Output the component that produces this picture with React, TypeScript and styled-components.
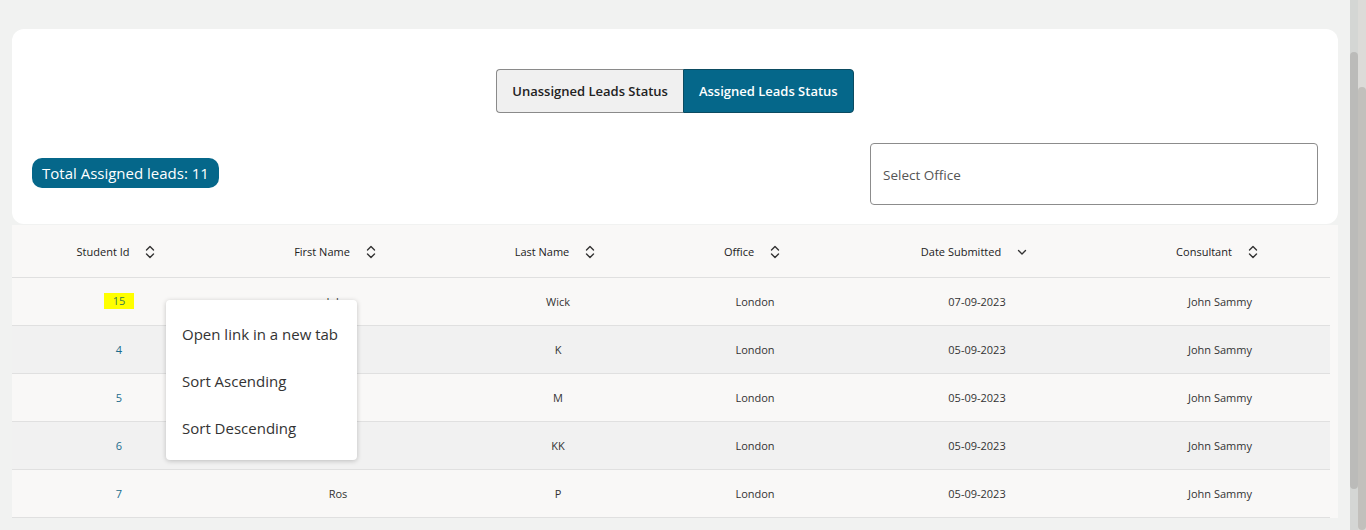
import React from "react";
import styled, { createGlobalStyle } from "styled-components";

const Global = createGlobalStyle`
  html, body { margin: 0; padding: 0; height: 530px; overflow: hidden; }
  body { font-family: "Open Sans", "Noto Sans", Arial, sans-serif; color: #333; }
  * { box-sizing: border-box; }
`;

const Shell = styled.div`
  display: flex;
  width: 1366px;
  height: 530px;
  overflow: hidden;
  background: #f1f2f1;
`;

const Main = styled.main`
  width: 1350px;
  height: 530px;
  padding: 29px 12px 0 12px;
  display: flex;
  flex-direction: column;
`;

const Track = styled.div<{ $bg: string }>`
  width: 8px;
  height: 530px;
  background: ${(p) => p.$bg};
  display: flex;
  flex-direction: column;
`;

const Thumb = styled.div<{ $top: number; $height: number; $bg: string }>`
  margin-top: ${(p) => p.$top}px;
  height: ${(p) => p.$height}px;
  width: 8px;
  border-radius: 4px;
  background: ${(p) => p.$bg};
`;

const Card = styled.section`
  background: #ffffff;
  border-radius: 12px;
  padding: 40px 20px 19px 20px;
  display: flex;
  flex-direction: column;
  align-items: stretch;
  gap: 30px;
`;

const ToggleGroup = styled.div`
  display: flex;
  justify-content: center;
`;

const Toggle = styled.button<{ $active?: boolean; $first?: boolean }>`
  height: 44px;
  padding: 0 15px;
  font-family: "Open Sans", Arial, sans-serif;
  font-size: 13px;
  font-weight: 600;
  color: ${(p) => (p.$active ? "#ffffff" : "#222")};
  background: ${(p) => (p.$active ? "#05678a" : "#f0f0f0")};
  border: 1px solid ${(p) => (p.$active ? "#0b4b61" : "#8a8a8a")};
  border-radius: ${(p) => (p.$first ? "4px 0 0 4px" : "0 4px 4px 0")};
  ${(p) => (p.$first ? "border-right: none;" : "")}
  cursor: pointer;
`;

const FilterRow = styled.div`
  display: flex;
  align-items: center;
  justify-content: space-between;
`;

const Badge = styled.div`
  height: 30px;
  padding: 0 10px;
  display: flex;
  align-items: center;
  background: #05678a;
  color: #fff;
  border-radius: 10px;
  font-size: 15px;
  margin-top: -2px;
`;

const SelectBox = styled.div`
  width: 448px;
  height: 62px;
  border: 1px solid #8c8c8c;
  border-radius: 4px;
  display: flex;
  align-items: center;
  padding: 2px 0 0 12px;
  font-size: 13.5px;
  color: #555;
`;

const TableWrap = styled.div`
  position: relative;
  margin-top: 1px;
  width: 1326px;
  background: #f9f8f7;
  padding-right: 8px;
`;

const Table = styled.table`
  width: 1318px;
  border-collapse: collapse;
  table-layout: fixed;
`;

const Th = styled.th`
  height: 52px;
  padding: 2px 0 0;
  font-weight: 400;
  font-size: 11px;
  color: #222;
  border-bottom: 1px solid #e0e0e0;
  background: #f9f8f7;
`;

const HeadInner = styled.div`
  display: flex;
  align-items: center;
  justify-content: center;
  gap: 16px;
  padding-right: 6px;
`;

const Tr = styled.tr<{ $alt?: boolean }>`
  background: ${(p) => (p.$alt ? "#f1f1f1" : "#f9f8f7")};
`;

const Td = styled.td<{ $link?: boolean }>`
  height: 48px;
  padding: 0;
  text-align: center;
  font-size: 11px;
  color: ${(p) => (p.$link ? "#1a6c8c" : "#333")};
  border-bottom: 1px solid #e0e0e0;
`;

const Mark = styled.span`
  display: inline-block;
  background: #ffff00;
  color: #3a7a4e;
  padding: 1px 9px;
  line-height: 14px;
`;

const Menu = styled.div`
  position: absolute;
  left: 154px;
  top: 75px;
  width: 191px;
  padding: 10px 0 9px;
  background: #fff;
  border-radius: 4px;
  box-shadow: 0 1px 5px rgba(0, 0, 0, 0.22);
  display: flex;
  flex-direction: column;
`;

const MenuItem = styled.div`
  height: 47px;
  display: flex;
  align-items: center;
  padding-left: 16px;
  font-size: 15px;
  color: #333;
`;

const SortIcon = ({ dir }: { dir?: "down" }) =>
  dir === "down" ? (
    <svg width="10" height="14" viewBox="0 0 10 14" fill="none">
      <path d="M1.5 5.5 L5 9 L8.5 5.5" stroke="#333" strokeWidth="1.4" strokeLinecap="round" strokeLinejoin="round" />
    </svg>
  ) : (
    <svg width="10" height="14" viewBox="0 0 10 14" fill="none">
      <path d="M1.5 5 L5 1.5 L8.5 5" stroke="#333" strokeWidth="1.4" strokeLinecap="round" strokeLinejoin="round" />
      <path d="M1.5 9 L5 12.5 L8.5 9" stroke="#333" strokeWidth="1.4" strokeLinecap="round" strokeLinejoin="round" />
    </svg>
  );

const columns: { label: string; width: number; dir?: "down" }[] = [
  { label: "Student Id", width: 214 },
  { label: "First Name", width: 224 },
  { label: "Last Name", width: 216 },
  { label: "Office", width: 178 },
  { label: "Date Submitted", width: 266, dir: "down" },
  { label: "Consultant", width: 220 },
];

const rows = [
  { id: "15", first: "John", last: "Wick", office: "London", date: "07-09-2023", consultant: "John Sammy", mark: true },
  { id: "4", first: "Jane", last: "K", office: "London", date: "05-09-2023", consultant: "John Sammy" },
  { id: "5", first: "Mike", last: "M", office: "London", date: "05-09-2023", consultant: "John Sammy" },
  { id: "6", first: "Kim", last: "KK", office: "London", date: "05-09-2023", consultant: "John Sammy" },
  { id: "7", first: "Ros", last: "P", office: "London", date: "05-09-2023", consultant: "John Sammy" },
];

export default function App() {
  return (
    <>
      <Global />
      <Shell>
        <Main>
          <Card>
            <ToggleGroup>
              <Toggle $first>Unassigned Leads Status</Toggle>
              <Toggle $active>Assigned Leads Status</Toggle>
            </ToggleGroup>
            <FilterRow>
              <Badge>Total Assigned leads: 11</Badge>
              <SelectBox>Select Office</SelectBox>
            </FilterRow>
          </Card>
          <TableWrap>
            <Table>
              <colgroup>
                {columns.map((c) => (
                  <col key={c.label} style={{ width: c.width }} />
                ))}
              </colgroup>
              <thead>
                <tr>
                  {columns.map((c) => (
                    <Th key={c.label}>
                      <HeadInner>
                        <span>{c.label}</span>
                        <SortIcon dir={c.dir} />
                      </HeadInner>
                    </Th>
                  ))}
                </tr>
              </thead>
              <tbody>
                {rows.map((r, i) => (
                  <Tr key={r.id} $alt={i % 2 === 1}>
                    <Td $link>{r.mark ? <Mark>{r.id}</Mark> : r.id}</Td>
                    <Td>{r.first}</Td>
                    <Td>{r.last}</Td>
                    <Td>{r.office}</Td>
                    <Td>{r.date}</Td>
                    <Td>{r.consultant}</Td>
                  </Tr>
                ))}
              </tbody>
            </Table>
            <Menu>
              <MenuItem>Open link in a new tab</MenuItem>
              <MenuItem>Sort Ascending</MenuItem>
              <MenuItem>Sort Descending</MenuItem>
            </Menu>
          </TableWrap>
        </Main>
        <Track $bg="#d4d6d4">
          <Thumb $top={52} $height={437} $bg="#bbbbb9" />
        </Track>
        <Track $bg="#dcdbd8">
          <Thumb $top={87} $height={460} $bg="#c2c0bc" />
        </Track>
      </Shell>
    </>
  );
}
